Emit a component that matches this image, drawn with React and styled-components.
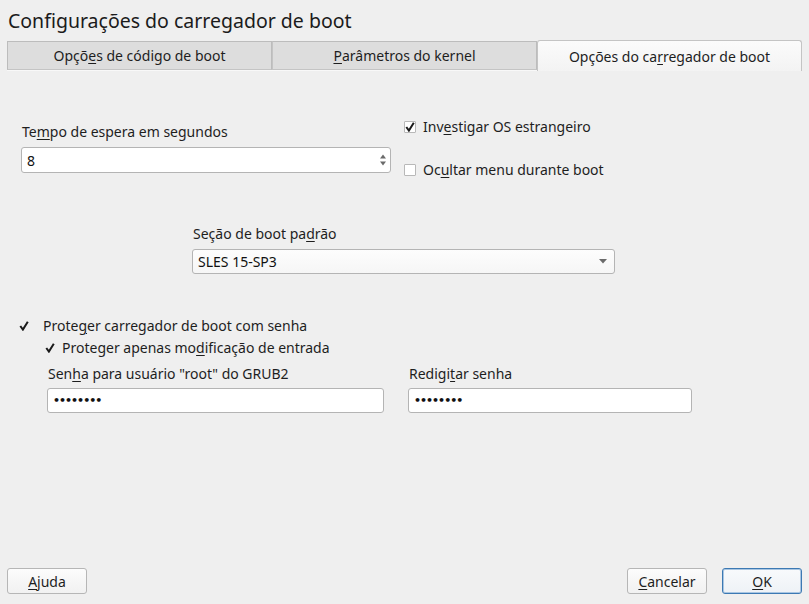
import React from "react";
import styled, { createGlobalStyle } from "styled-components";

const GlobalStyle = createGlobalStyle`
  html, body {
    margin: 0;
    padding: 0;
    background: #efefef;
  }
  body {
    font-family: "Noto Sans", "Open Sans", sans-serif;
    color: #1e1e1e;
  }
`;

export default function App() {
  return (
    <Window>
      <GlobalStyle />
      <Title>Configurações do carregador de boot</Title>

      {/* abas */}
      <TabBar>
        <Tab>
          Opçõ<Mn>e</Mn>s de código de boot
        </Tab>
        <Tab>
          <Mn>P</Mn>arâmetros do kernel
        </Tab>
        <Tab $active>
          Opções do ca<Mn>r</Mn>regador de boot
        </Tab>
      </TabBar>

      <Content>
        <TopRow>
          <TimeoutCol>
            <Label>
              Te<Mn>m</Mn>po de espera em segundos
            </Label>
            <SpinBox>
              <span>8</span>
              <SpinArrows>
                <svg width="8" height="16" viewBox="0 0 8 16">
                  <path d="M1 6.5 L4 2.5 L7 6.5 Z" fill="#6a6a6a" />
                  <path d="M1 9.5 L4 13.5 L7 9.5 Z" fill="#6a6a6a" />
                </svg>
              </SpinArrows>
            </SpinBox>
          </TimeoutCol>

          <ChecksCol>
            <Check $gap={7}>
              <Box $checked>
                <CheckMark />
              </Box>
              <span>
                Inv<Mn>e</Mn>stigar OS estrangeiro
              </span>
            </Check>
            <Check $gap={7}>
              <Box />
              <span>
                Oc<Mn>u</Mn>ltar menu durante boot
              </span>
            </Check>
          </ChecksCol>
        </TopRow>

        <DefaultSection>
          <Label>
            Seção de boot pa<Mn>d</Mn>rão
          </Label>
          <Combo>
            <span>SLES 15-SP3</span>
            <svg width="8" height="5" viewBox="0 0 8 5">
              <path d="M0 0 L8 0 L4 4.5 Z" fill="#6a6a6a" />
            </svg>
          </Combo>
        </DefaultSection>

        <ProtectSection>
          <Check $gap={13}>
            <Box $checked $flat>
              <CheckMark />
            </Box>
            <span>
              Prote<Mn>g</Mn>er carregador de boot com senha
            </span>
          </Check>
          <SubCheck $gap={6}>
            <Box $checked $flat>
              <CheckMark />
            </Box>
            <span>
              Proteger apenas mo<Mn>d</Mn>ificação de entrada
            </span>
          </SubCheck>

          <PasswordRow>
            <Field $width={337}>
              <Label>
                Sen<Mn>h</Mn>a para usuário "root" do GRUB2
              </Label>
              <TextInput>
                <Dots>••••••••</Dots>
              </TextInput>
            </Field>
            <Field $width={284}>
              <Label>
                Redigi<Mn>t</Mn>ar senha
              </Label>
              <TextInput>
                <Dots>••••••••</Dots>
              </TextInput>
            </Field>
          </PasswordRow>
        </ProtectSection>
      </Content>

      <Footer>
        <Button>
          <Mn>A</Mn>juda
        </Button>
        <ButtonGroup>
          <Button>
            <Mn>C</Mn>ancelar
          </Button>
          <Button $default>
            <Mn>O</Mn>K
          </Button>
        </ButtonGroup>
      </Footer>
    </Window>
  );
}

function CheckMark() {
  return (
    <svg width="10" height="10" viewBox="0 0 10 10">
      <path
        d="M1.3 5 L3.9 8.6 L8.8 0.8"
        fill="none"
        stroke="#1a1a1a"
        strokeWidth="2"
      />
    </svg>
  );
}

const Window = styled.div`
  display: flex;
  flex-direction: column;
  width: 809px;
  height: 604px;
  background: #efefef;
  box-sizing: border-box;
`;

const Title = styled.div`
  font-size: 19.5px;
  line-height: 24px;
  padding: 9px 0 0 8px;
  color: #1b1b1b;
`;

const TabBar = styled.div`
  display: flex;
  margin: 7px 7px 0;
  height: 31px;
`;

const Tab = styled.div`
  flex: 1;
  display: flex;
  align-items: center;
  justify-content: center;
  box-sizing: border-box;
  font-size: 14px;
  color: #1e1e1e;
  height: ${(p) => (p.$active ? "31px" : "29px")};
  margin-top: ${(p) => (p.$active ? "0" : "1px")};
  background: ${(p) =>
    p.$active ? "linear-gradient(#fbfbfb, #f3f3f3)" : "#dddddd"};
  border: 1px solid ${(p) => (p.$active ? "#c4c4c4" : "#bcbcbc")};
  border-bottom: ${(p) => (p.$active ? "none" : "1px solid #c4c4c4")};
  border-radius: ${(p) => (p.$active ? "3px 3px 0 0" : "0")};
  box-shadow: ${(p) => (p.$active ? "none" : "0 1px 0 #f8f8f8")};

  & + & {
    border-left: ${(p) => (p.$active ? "1px solid #c4c4c4" : "none")};
  }
`;

const Mn = styled.span`
  text-decoration: underline;
  text-underline-offset: 2px;
`;

const Content = styled.div`
  flex: 1;
  display: flex;
  flex-direction: column;
`;

const TopRow = styled.div`
  display: flex;
  margin-top: 47px;
  padding-left: 21px;
`;

const TimeoutCol = styled.div`
  display: flex;
  flex-direction: column;
  width: 370px;
  padding-top: 5px;
  gap: 6px;
`;

const ChecksCol = styled.div`
  display: flex;
  flex-direction: column;
  gap: 25px;
  margin-left: 13px;
`;

const Label = styled.div`
  font-size: 14px;
  line-height: 18px;
  padding-left: 1px;
  color: #1e1e1e;
`;

const inputBase = `
  display: flex;
  align-items: center;
  box-sizing: border-box;
  height: 26px;
  border: 1px solid #b4b4b4;
  border-radius: 3px;
  font-size: 14px;
  color: #111;
`;

const SpinBox = styled.div`
  ${inputBase}
  background: #ffffff;
  padding-left: 5px;
  justify-content: space-between;
`;

const SpinArrows = styled.div`
  display: flex;
  align-items: center;
  justify-content: center;
  width: 14px;
  height: 100%;
`;

const Check = styled.label`
  display: flex;
  align-items: center;
  gap: ${(p) => p.$gap}px;
  font-size: 14px;
  line-height: 18px;
  color: #1e1e1e;
`;

const SubCheck = styled(Check)`
  margin: 4px 0 0 26px;
`;

const Box = styled.span`
  display: flex;
  align-items: center;
  justify-content: center;
  width: 12px;
  height: 12px;
  box-sizing: border-box;
  border: 1px solid ${(p) => (p.$flat ? "#efefef" : "#b8b8b8")};
  background: ${(p) => (p.$flat ? "#efefef" : "#ffffff")};
  border-radius: 1px;

  svg {
    flex-shrink: 0;
  }
`;

const DefaultSection = styled.div`
  display: flex;
  flex-direction: column;
  gap: 6px;
  width: 423px;
  margin: 46px 0 0 192px;
`;

const Combo = styled.div`
  ${inputBase}
  height: 25px;
  justify-content: space-between;
  padding: 0 7px 0 5px;
  background: linear-gradient(#fdfdfd, #f6f6f6);
`;

const ProtectSection = styled.div`
  display: flex;
  flex-direction: column;
  margin: 43px 0 0 18px;
`;

const PasswordRow = styled.div`
  display: flex;
  gap: 24px;
  margin: 8px 0 0 29px;
`;

const Field = styled.div`
  display: flex;
  flex-direction: column;
  gap: 5px;
  width: ${(p) => p.$width}px;
`;

const TextInput = styled.div`
  ${inputBase}
  height: 25px;
  background: #ffffff;
  padding-left: 5px;
`;

const Dots = styled.span`
  font-size: 11px;
  font-weight: bold;
  letter-spacing: -1px;
  font-family: "DejaVu Sans", sans-serif;
`;

const Footer = styled.div`
  display: flex;
  justify-content: space-between;
  align-items: center;
  padding: 0 7px 10px;
`;

const ButtonGroup = styled.div`
  display: flex;
  gap: 15px;
`;

const Button = styled.button`
  width: 80px;
  height: 26px;
  box-sizing: border-box;
  font-family: "Noto Sans", "Open Sans", sans-serif;
  font-size: 14px;
  color: #1e1e1e;
  border-radius: 3px;
  border: 1px solid ${(p) => (p.$default ? "#3c79b3" : "#b6b6b6")};
  background: ${(p) =>
    p.$default
      ? "linear-gradient(#f8fafc, #eef2f6)"
      : "linear-gradient(#fcfcfc, #f1f1f1)"};
  box-shadow: ${(p) => (p.$default ? "inset 0 0 0 1px #a9c6e2" : "none")};
  padding: 0;
`;
